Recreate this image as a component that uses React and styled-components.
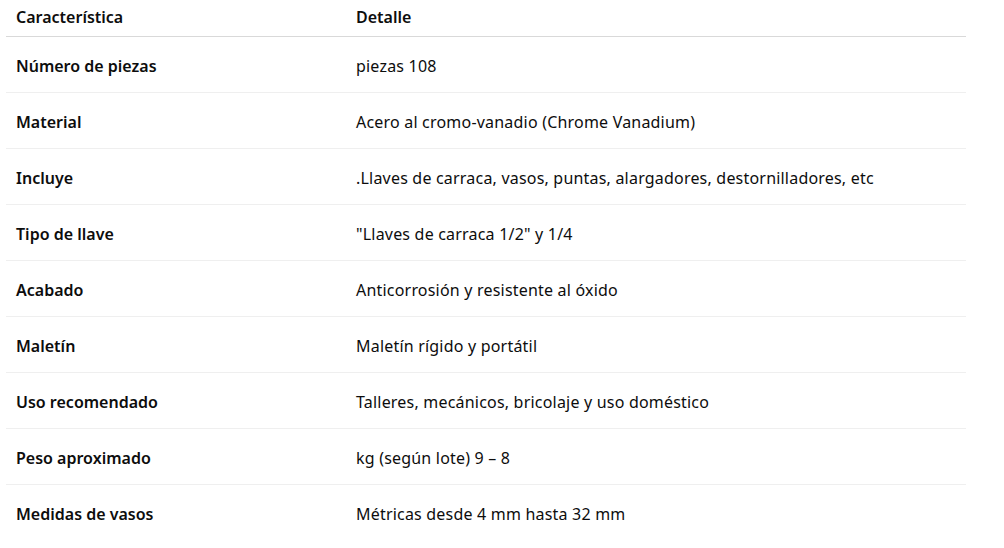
import React from 'react'
import styled, { createGlobalStyle } from 'styled-components'

const Global = createGlobalStyle`
    html, body {
        margin: 0;
        padding: 0;
        background: #fff;
    }
    body {
        font-family: "Noto Sans", "Open Sans", sans-serif;
        color: #0d0d0d;
    }
`

const Wrapper = styled.div`
    padding: 0 38px 0 6px;
`

const Table = styled.table`
    width: 960px;
    table-layout: fixed;
    border-collapse: collapse;
    font-size: 16px;
    line-height: 24px;
`

const Col = styled.col`
    width: ${(p) => p.$width || 'auto'};
`

const HeadCell = styled.th`
    text-align: left;
    font-weight: 600;
    padding: 5px 10px 7px;
    border-bottom: 1px solid #d9d9d9;
`

const Row = styled.tr`
    border-bottom: ${(p) => (p.$last ? 'none' : '1px solid #efefef')};
`

const Cell = styled.td`
    padding: 17px 10px 14px;
    font-weight: ${(p) => (p.$bold ? 600 : 400)};
    letter-spacing: ${(p) => (p.$bold ? '0' : '0.2px')};
    vertical-align: middle;
    white-space: nowrap;
`

const rows = [
    ['Número de piezas', 'piezas 108'],
    ['Material', 'Acero al cromo-vanadio (Chrome Vanadium)'],
    ['Incluye', '.Llaves de carraca, vasos, puntas, alargadores, destornilladores, etc'],
    ['Tipo de llave', '"Llaves de carraca 1/2" y 1/4'],
    ['Acabado', 'Anticorrosión y resistente al óxido'],
    ['Maletín', 'Maletín rígido y portátil'],
    ['Uso recomendado', 'Talleres, mecánicos, bricolaje y uso doméstico'],
    ['Peso aproximado', 'kg (según lote) 9 – 8'],
    ['Medidas de vasos', 'Métricas desde 4 mm hasta 32 mm'],
]

const App = () => {
    return (
        <Wrapper>
            <Global />
            <Table>
                <colgroup>
                    <Col $width="340px" />
                    <Col />
                </colgroup>
                <thead>
                    <tr>
                        <HeadCell>Característica</HeadCell>
                        <HeadCell>Detalle</HeadCell>
                    </tr>
                </thead>
                <tbody>
                    {rows.map(([k, v], i) => (
                        <Row key={k} $last={i === rows.length - 1}>
                            <Cell $bold>{k}</Cell>
                            <Cell>{v}</Cell>
                        </Row>
                    ))}
                </tbody>
            </Table>
        </Wrapper>
    )
}

export default App
